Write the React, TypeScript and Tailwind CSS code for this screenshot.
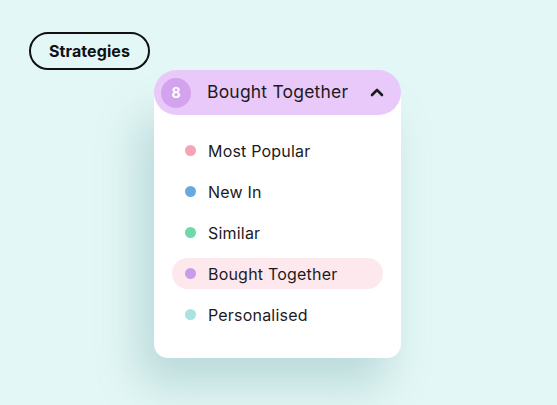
import React from "react";

const items = [
  { label: "Most Popular", dot: "bg-[#f6a3b6]", active: false },
  { label: "New In", dot: "bg-[#6aa9dc]", active: false },
  { label: "Similar", dot: "bg-[#6fdaa9]", active: false },
  { label: "Bought Together", dot: "bg-[#c99ce9]", active: true },
  { label: "Personalised", dot: "bg-[#a8e3e0]", active: false },
];

export default function App() {
  return (
    <div
      className="w-[557px] h-[405px] bg-[#e3f7f6] overflow-hidden flex flex-col items-start pt-[32px] pl-[29px]"
      style={{ fontFamily: "Inter, 'Noto Sans', sans-serif" }}
    >
      <div className="w-[121px] h-[38px] rounded-full border-2 border-[#111] flex items-center justify-center text-[16px] font-bold text-[#111] tracking-[0.1px]">
        Strategies
      </div>
      <div className="ml-[125px] w-[247px] h-[288px] flex flex-col">
        <div className="relative z-10 h-[45px] rounded-full bg-[#e9c9f9] flex items-center pl-[7px] pr-[17px]">
          <div className="w-[30px] h-[30px] rounded-full bg-[#d3a3ee] flex items-center justify-center text-white text-[14px] font-bold">
            8
          </div>
          <div className="ml-[16px] text-[17.5px] tracking-[0.2px] text-[#1d1a22] flex-1">Bought Together</div>
          <svg width="14" height="10" viewBox="0 0 14 10" className="mb-[1px]">
            <path d="M2 8 L7 3 L12 8" fill="none" stroke="#1d1a22" strokeWidth="2.6" strokeLinecap="round" strokeLinejoin="round" />
          </svg>
        </div>
        <div className="-mt-[22px] flex-1 bg-white rounded-b-[14px] shadow-[-14px_26px_44px_rgba(90,150,150,0.3)] flex flex-col gap-[10px] px-[18px] pt-[42px]">
          {items.map((it) => (
            <div
              key={it.label}
              className={`h-[31px] rounded-full flex items-center pl-[13px] ${it.active ? "bg-[#fde8ed]" : ""}`}
            >
              <span className={`w-[11px] h-[11px] rounded-full ${it.dot}`} />
              <span className="ml-[12px] text-[16px] tracking-[0.2px] text-[#1d1a22]">{it.label}</span>
            </div>
          ))}
        </div>
      </div>
    </div>
  );
}
